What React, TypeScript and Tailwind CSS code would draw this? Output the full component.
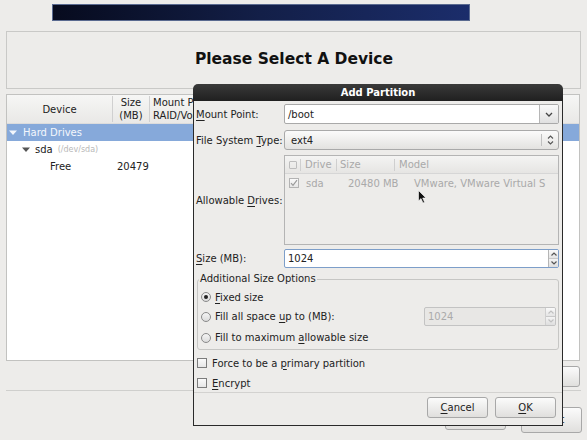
import React from 'react'

const U = ({ children }: { children: React.ReactNode }) => (
  <span className="underline underline-offset-2 decoration-[1px]">{children}</span>
)

function Radio({ checked }: { checked?: boolean }) {
  return (
    <span className="w-[10px] h-[10px] rounded-full border border-[#8a8a8a] bg-gradient-to-b from-[#f4f4f4] to-[#dcdcdc] flex items-center justify-center shrink-0">
      {checked && <span className="w-[4px] h-[4px] rounded-full bg-[#222]" />}
    </span>
  )
}

function Check({ checked, muted }: { checked?: boolean; muted?: boolean }) {
  return (
    <span
      className={`w-[10px] h-[10px] border ${muted ? 'border-[#b3b3b3]' : 'border-[#7c7c7c]'} bg-gradient-to-b from-[#fafafa] to-[#e6e6e6] flex items-center justify-center shrink-0`}
    >
      {checked && (
        <svg width="8" height="8" viewBox="0 0 8 8">
          <path d="M1 4.2 L3 6.3 L7 1.2" fill="none" stroke="#9a9a9a" strokeWidth="1.2" />
        </svg>
      )}
    </span>
  )
}

function SpinArrows({ muted }: { muted?: boolean }) {
  const c = muted ? '#c0c0c0' : '#555'
  return (
    <div className={`w-[10px] h-full flex flex-col border-l ${muted ? 'border-[#cfcfcf]' : 'border-[#b5b5b5]'}`}>
      <div className="flex-1 flex items-center justify-center bg-gradient-to-b from-[#fafafa] to-[#e4e4e4]">
        <svg width="6" height="4" viewBox="0 0 6 4">
          <path d="M0.5 3.5 L3 1 L5.5 3.5" fill="none" stroke={c} strokeWidth="1.2" />
        </svg>
      </div>
      <div className="flex-1 flex items-center justify-center bg-gradient-to-b from-[#f4f4f4] to-[#dedede] border-t border-[#c8c8c8]">
        <svg width="6" height="4" viewBox="0 0 6 4">
          <path d="M0.5 0.5 L3 3 L5.5 0.5" fill="none" stroke={c} strokeWidth="1.2" />
        </svg>
      </div>
    </div>
  )
}

function Button({ children, className = '' }: { children: React.ReactNode; className?: string }) {
  return (
    <div
      className={`h-[21px] rounded-[3px] border border-[#a8a8a8] bg-gradient-to-b from-[#fbfbfb] to-[#e0dfdd] flex items-center justify-center text-[10px] text-[#222] ${className}`}
    >
      {children}
    </div>
  )
}

function AddPartitionDialog() {
  return (
    <div className="absolute left-[193px] top-[84px] w-[370px] h-[342px] flex flex-col">
      <div className="h-[17px] rounded-t-[5px] bg-gradient-to-b from-[#3a3a3a] to-[#202020] flex items-center justify-center text-white font-bold text-[10px]">
        Add Partition
      </div>
      <div className="flex-1 bg-[#edecea] border border-t-0 border-[#2a2a2a] px-[2px] flex flex-col text-[10px] text-[#222]">
        {/* mount point */}
        <div className="flex items-center mt-[3px] h-[20px]">
          <div className="w-[88px]"><U>M</U>ount Point:</div>
          <div className="flex-1 h-full mr-[1px] flex rounded-[2px] border border-[#a9a9a9] bg-white overflow-hidden">
            <div className="flex-1 pl-[3px] flex items-center">/boot</div>
            <div className="w-[19px] border-l border-[#b6b6b6] bg-gradient-to-b from-[#fafafa] to-[#e0e0e0] flex items-center justify-center">
              <svg width="8" height="5" viewBox="0 0 8 5">
                <path d="M1 1 L4 4 L7 1" fill="none" stroke="#444" strokeWidth="1.3" />
              </svg>
            </div>
          </div>
        </div>
        {/* fs type */}
        <div className="flex items-center mt-[6px] h-[20px]">
          <div className="w-[88px]">File System <U>T</U>ype:</div>
          <div className="flex-1 h-full mr-[1px] flex rounded-[3px] border border-[#a9a9a9] bg-gradient-to-b from-[#fbfbfb] to-[#e3e2e0] overflow-hidden">
            <div className="flex-1 pl-[6px] flex items-center">ext4</div>
            <div className="my-[3px] border-l border-[#c0c0c0]" />
            <div className="w-[16px] flex items-center justify-center">
              <svg width="7" height="10" viewBox="0 0 7 10">
                <path d="M1 3.5 L3.5 1 L6 3.5 M1 6.5 L3.5 9 L6 6.5" fill="none" stroke="#555" strokeWidth="1.1" />
              </svg>
            </div>
          </div>
        </div>
        {/* allowable drives */}
        <div className="flex items-center mt-[5px] h-[90px]">
          <div className="w-[88px]">Allowable <U>D</U>rives:</div>
          <div className="flex-1 h-full mr-[1px] border border-[#b4b4b4] bg-[#edecea] relative text-[#a9a9a9]">
            <div className="h-[18px] flex items-center border-b border-[#d6d6d6] bg-gradient-to-b from-[#f4f4f3] to-[#e6e5e3]">
              <div className="w-[15px] pl-[4px] flex items-center">
                <span className="w-[8px] h-[8px] border border-[#bdbdbd] rounded-[1px]" />
              </div>
              <div className="h-[12px] border-l border-[#cfcfcf]" />
              <div className="w-[35px] pl-[4px]">Drive</div>
              <div className="h-[12px] border-l border-[#cfcfcf]" />
              <div className="w-[57px] pl-[3px]">Size</div>
              <div className="h-[12px] border-l border-[#cfcfcf]" />
              <div className="pl-[4px]">Model</div>
            </div>
            <div className="h-[18px] flex items-center">
              <div className="w-[21px] pl-[4px] flex items-center">
                <Check checked muted />
              </div>
              <div className="w-[42px]">sda</div>
              <div className="w-[66px]">20480 MB</div>
              <div>VMware, VMware Virtual S</div>
            </div>
            <svg className="absolute left-[133px] top-[34px]" width="9" height="14" viewBox="0 0 9 14">
              <path d="M0.5 0.5 L0.5 11 L3 8.6 L5 13 L6.6 12.3 L4.7 8 L8 8 Z" fill="#111" stroke="#fff" strokeWidth="0.6" />
            </svg>
          </div>
        </div>
        {/* size */}
        <div className="flex items-center mt-[4px] h-[19px]">
          <div className="w-[88px]"><U>S</U>ize (MB):</div>
          <div className="flex-1 h-full mr-[1px] flex rounded-[2px] border border-[#7d9ec9] bg-white overflow-hidden">
            <div className="flex-1 pl-[3px] flex items-center">1024</div>
            <SpinArrows />
          </div>
        </div>
        {/* additional size options */}
        <div className="relative mt-[11px] ml-[1px] mr-[1px] h-[71px] rounded-[3px] border border-[#c6c6c4] pt-[8px] pl-[3px]">
          <div className="absolute left-[1px] top-[-7px] bg-[#edecea] px-[1px] leading-[12px]">Additional Size Options</div>
          <div className="flex items-center gap-[4px] h-[18px]">
            <Radio checked />
            <span><U>F</U>ixed size</span>
          </div>
          <div className="flex items-center gap-[4px] h-[21px]">
            <Radio />
            <span>Fill all space <U>u</U>p to (MB):</span>
            <div className="ml-auto mr-[2px] w-[132px] h-[19px] flex rounded-[2px] border border-[#c3c3c3] bg-[#e8e7e5] overflow-hidden text-[#ababab]">
              <div className="flex-1 pl-[3px] flex items-center">1024</div>
              <SpinArrows muted />
            </div>
          </div>
          <div className="flex items-center gap-[4px] h-[21px]">
            <Radio />
            <span>Fill to maximum <U>a</U>llowable size</span>
          </div>
        </div>
        {/* checkboxes */}
        <div className="flex items-center gap-[5px] h-[20px] mt-[3px] pl-[1px]">
          <Check />
          <span>Force to be a <U>p</U>rimary partition</span>
        </div>
        <div className="flex items-center gap-[5px] h-[20px] pl-[1px]">
          <Check />
          <span><U>E</U>ncrypt</span>
        </div>
        <div className="border-t border-[#d3d2d0] mt-[-1px] mx-[-2px]" />
        <div className="flex justify-end gap-[7px] mt-[4px] mr-[4px]">
          <Button className="w-[61px]"><U>C</U>ancel</Button>
          <Button className="w-[61px]"><U>O</U>K</Button>
        </div>
      </div>
    </div>
  )
}

export default function App() {
  return (
    <div className="w-[587px] h-[440px] relative overflow-hidden bg-[#edecea] font-['DejaVu_Sans',sans-serif] text-[#222]">
      <div className="ml-[52px] mt-[4px] w-[418px] h-[17px] bg-gradient-to-r from-[#070b1e] via-[#131f48] to-[#1b2d6b] border border-[#5a6a90]" />

      <div className="mx-[6px] mt-[10px] h-[58px] border border-[#c9c9c7] flex items-center justify-center">
        <span className="text-[15.5px] font-bold text-[#111] pl-[1px]">Please Select A Device</span>
      </div>

      <div className="ml-[6px] mr-[7px] mt-[5px] h-[267px] border border-[#c2c2c0] bg-white text-[10px]">
        <div className="h-[29px] flex border-b border-[#dcdcdc] bg-gradient-to-b from-[#f6f6f5] to-[#e9e8e6]">
          <div className="w-[105px] flex items-center justify-center">Device</div>
          <div className="my-[1px] border-l border-[#d0d0d0]" />
          <div className="w-[36px] flex items-center justify-center text-center leading-[13px]">Size<br />(MB)</div>
          <div className="my-[1px] border-l border-[#d0d0d0]" />
          <div className="w-[43px] pl-[3px] flex items-center leading-[13px] whitespace-nowrap overflow-hidden">Mount Point/<br />RAID/Volume</div>
          <div className="flex-1" />
        </div>
        <div className="h-[17px] flex items-center bg-[#86a9da] text-[#f4f7fc] pl-[2px] gap-[6px]">
          <svg width="8" height="6" viewBox="0 0 8 6"><path d="M0 0.5 L8 0.5 L4 5 Z" fill="#f4f7fc" /></svg>
          Hard Drives
        </div>
        <div className="h-[17px] flex items-center pl-[15px] gap-[5px]">
          <svg width="8" height="6" viewBox="0 0 8 6"><path d="M0 0.5 L8 0.5 L4 5 Z" fill="#555" /></svg>
          <span>sda</span>
          <span className="text-[8px] text-[#b8b8b8]">(/dev/sda)</span>
        </div>
        <div className="h-[17px] flex items-center">
          <span className="pl-[43px] w-[110px]">Free</span>
          <span>20479</span>
        </div>
      </div>

      <div className="mx-[7px] mt-[5px] h-[19px] flex justify-end">
        <Button className="w-[75px]">Reset</Button>
      </div>
      <div className="mx-[6px] mt-[5px] border-t border-[#cfcfcd]" />
      <div className="mt-[16px] mr-[5px] flex justify-end gap-[15px]">
        <Button className="w-[61px] h-[23px]">Back</Button>
        <Button className="w-[61px] h-[26px] border-[#8fa8cc] text-[11px]">Next</Button>
      </div>

      <AddPartitionDialog />
    </div>
  )
}
